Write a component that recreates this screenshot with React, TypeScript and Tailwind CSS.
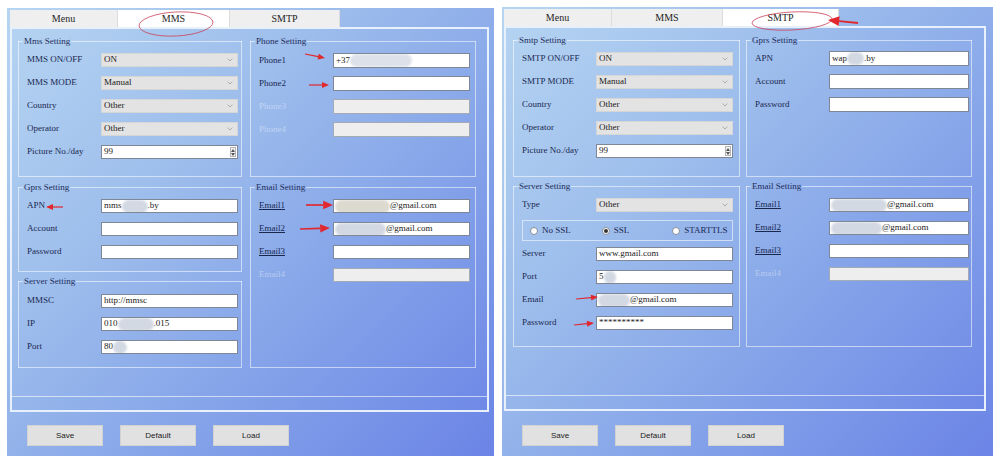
import type { ReactNode } from 'react'
import { clsx, type ClassValue } from 'clsx'
import { twMerge } from 'tailwind-merge'

const cn = (...inputs: ClassValue[]) => twMerge(clsx(inputs))

function Blob({ className }: { className?: string }) {
  return <span className={cn('inline-block h-[13px] shrink-0 rounded-full bg-[#d3d9e3] blur-[1px]', className)} />
}

function GroupBox({
  title,
  className,
  bodyClass,
  children,
}: {
  title: string
  className?: string
  bodyClass?: string
  children?: ReactNode
}) {
  return (
    <div className={cn('flex flex-col', className)}>
      <div className="flex h-[11px] items-center">
        <div className="h-px w-[5px] bg-white/55" />
        <span className="whitespace-nowrap px-[1px] text-[9px] leading-[11px] text-[#1f2e5c]">{title}</span>
        <div className="h-px flex-1 bg-white/55" />
      </div>
      <div className={cn('-mt-[6px] flex flex-1 flex-col gap-[9px] border border-t-0 border-white/55 pl-[8px] pt-[12px]', bodyClass)}>
        {children}
      </div>
    </div>
  )
}

function Row({
  label,
  disabled,
  underline,
  className,
  children,
}: {
  label: string
  disabled?: boolean
  underline?: boolean
  className?: string
  children: ReactNode
}) {
  return (
    <div className={cn('flex h-[14px] items-center', className)}>
      <span
        className={cn(
          'w-[74px] shrink-0 whitespace-nowrap text-[9px] text-[#1a2850]',
          disabled && 'text-white/40',
          underline && 'underline decoration-[0.5px] underline-offset-1',
        )}
      >
        {label}
      </span>
      {children}
    </div>
  )
}

function Select({ value }: { value: string }) {
  return (
    <div className="flex h-[14px] w-[137px] items-center justify-between border border-[#d6d6d6] bg-[#e3e3e3] pl-[2px] pr-[4px] text-[9px] text-[#1a1a1a]">
      <span>{value}</span>
      <svg width="6" height="4" viewBox="0 0 6 4">
        <path d="M0.6 0.6 L3 3 L5.4 0.6" fill="none" stroke="#a0a0a0" strokeWidth="0.8" />
      </svg>
    </div>
  )
}

function TextBox({
  children,
  disabled,
  className,
}: {
  children?: ReactNode
  disabled?: boolean
  className?: string
}) {
  return (
    <div
      className={cn(
        'flex h-[14px] w-[137px] items-center overflow-hidden whitespace-nowrap border border-[#7f8797] bg-white pl-[2px] text-[9px] text-[#1a1a1a]',
        disabled && 'border-[#a4abb7] bg-[#eeeeee]',
        className,
      )}
    >
      {children}
    </div>
  )
}

function NumberBox({ value }: { value: string }) {
  return (
    <TextBox>
      <span>{value}</span>
      <div className="ml-auto mr-[1px] flex h-[10px] w-[6px] flex-col items-center justify-center gap-[1px] border border-[#b4b4b4] bg-[#f2f2f2]">
        <svg width="4" height="3" viewBox="0 0 4 3">
          <path d="M0 3 L2 0 L4 3 Z" fill="#555" />
        </svg>
        <svg width="4" height="3" viewBox="0 0 4 3">
          <path d="M0 0 L2 3 L4 0 Z" fill="#555" />
        </svg>
      </div>
    </TextBox>
  )
}

function Radio({ label, checked, className }: { label: string; checked?: boolean; className?: string }) {
  return (
    <div className={cn('flex items-center gap-[4px] text-[9px] text-[#1a2850]', className)}>
      <span className="flex h-[8px] w-[8px] items-center justify-center rounded-full border border-[#8a8f99] bg-white">
        {checked && <span className="h-[4px] w-[4px] rounded-full bg-[#333]" />}
      </span>
      <span>{label}</span>
    </div>
  )
}

function Tabs({ active, widths }: { active: string; widths: string[] }) {
  const tabs = ['Menu', 'MMS', 'SMTP']
  return (
    <div className="flex h-[17px]">
      {tabs.map((t, i) => (
        <div
          key={t}
          className={cn(
            'flex items-center justify-center border-r border-[#dcdcdc] bg-[#efefef] text-[10px] text-[#1e1e1e]',
            t === active && 'bg-white',
            widths[i],
          )}
        >
          {t}
        </div>
      ))}
    </div>
  )
}

function Buttons({ className }: { className?: string }) {
  return (
    <div className={cn('mt-[13px] flex gap-[17px]', className)}>
      {['Save', 'Default', 'Load'].map((b) => (
        <div
          key={b}
          className="flex h-[21px] w-[76px] items-center justify-center border border-[#d2d2d2] bg-[#e1e1e1] font-['Liberation_Sans',Arial,sans-serif] text-[8px] text-[#222]"
        >
          {b}
        </div>
      ))}
    </div>
  )
}

function Frame({ className, children }: { className?: string; children: ReactNode }) {
  return (
    <div className={cn('flex h-[385px] flex-col border-2 border-[#e8f0fb]', className)}>
      <div className="flex flex-1">{children}</div>
      <div className="h-[14px] border-t border-white/60" />
    </div>
  )
}

const panelBg =
  'bg-[linear-gradient(135deg,#b6d5f2_0%,#9dbdec_35%,#84a3e9_65%,#6b84e6_100%)]'

function MmsPanel() {
  return (
    <div className={cn('h-[448px] w-[487px] pl-[3px] pt-[2px]', panelBg)}>
      <Tabs active="MMS" widths={['w-[108px]', 'w-[112px]', 'w-[110px]']} />
      <Frame className="w-[479px]">
        <div className="flex gap-[8px] pl-[6px] pt-[7px]">
          <div className="flex w-[224px] flex-col">
            <GroupBox title="Mms Setting" className="h-[141px]">
              <Row label="MMS ON/OFF"><Select value="ON" /></Row>
              <Row label="MMS MODE"><Select value="Manual" /></Row>
              <Row label="Country"><Select value="Other" /></Row>
              <Row label="Operator"><Select value="Other" /></Row>
              <Row label="Picture No./day"><NumberBox value="99" /></Row>
            </GroupBox>
            <GroupBox title="Gprs Setting" className="mt-[5px] h-[90px]">
              <Row label="APN">
                <TextBox>
                  <span>mms</span>
                  <Blob className="w-[26px]" />
                  <span>.by</span>
                </TextBox>
              </Row>
              <Row label="Account"><TextBox /></Row>
              <Row label="Password"><TextBox /></Row>
            </GroupBox>
            <GroupBox title="Server Setting" className="mt-[4px] h-[92px]" bodyClass="pt-[13px]">
              <Row label="MMSC"><TextBox>http://mmsc</TextBox></Row>
              <Row label="IP">
                <TextBox>
                  <span>010</span>
                  <Blob className="w-[36px]" />
                  <span>.015</span>
                </TextBox>
              </Row>
              <Row label="Port">
                <TextBox>
                  <span>80</span>
                  <Blob className="w-[14px]" />
                </TextBox>
              </Row>
            </GroupBox>
          </div>
          <div className="flex w-[226px] flex-col">
            <GroupBox title="Phone Setting" className="h-[141px]" bodyClass="gap-[8px] pt-[12px]">
              <Row label="Phone1" className="h-[15px]">
                <TextBox className="h-[15px]">
                  <span>+37</span>
                  <Blob className="w-[62px] bg-[#dde2ea]" />
                </TextBox>
              </Row>
              <Row label="Phone2" className="h-[15px]"><TextBox className="h-[15px]" /></Row>
              <Row label="Phone3" disabled className="h-[15px]"><TextBox disabled className="h-[15px]" /></Row>
              <Row label="Phone4" disabled className="h-[15px]"><TextBox disabled className="h-[15px]" /></Row>
            </GroupBox>
            <GroupBox title="Email Setting" className="mt-[5px] h-[186px]">
              <Row label="Email1" underline>
                <TextBox>
                  <Blob className="-ml-[1px] w-[55px] bg-[#dcd9cf]" />
                  <span>@gmail.com</span>
                </TextBox>
              </Row>
              <Row label="Email2" underline>
                <TextBox>
                  <Blob className="-ml-[1px] w-[51px]" />
                  <span>@gmail.com</span>
                </TextBox>
              </Row>
              <Row label="Email3" underline><TextBox /></Row>
              <Row label="Email4" disabled><TextBox disabled /></Row>
            </GroupBox>
          </div>
        </div>
      </Frame>
      <Buttons className="ml-[17px]" />
    </div>
  )
}

function SmtpPanel() {
  return (
    <div className={cn('-mt-[1px] h-[449px] w-[491px] pl-[2px] pt-[2px]', panelBg)}>
      <Tabs active="SMTP" widths={['w-[108px]', 'w-[111px]', 'w-[116px]']} />
      <Frame className="w-[482px]">
        <div className="flex gap-[6px] pl-[7px] pt-[7px]">
          <div className="flex w-[227px] flex-col">
            <GroupBox title="Smtp Setting" className="h-[142px]">
              <Row label="SMTP ON/OFF"><Select value="ON" /></Row>
              <Row label="SMTP MODE"><Select value="Manual" /></Row>
              <Row label="Country"><Select value="Other" /></Row>
              <Row label="Operator"><Select value="Other" /></Row>
              <Row label="Picture No./day"><NumberBox value="99" /></Row>
            </GroupBox>
            <GroupBox title="Server Setting" className="mt-[4px] h-[166px]" bodyClass="gap-0">
              <Row label="Type"><Select value="Other" /></Row>
              <div className="mb-[6px] mt-[8px] flex h-[21px] w-[211px] items-center border border-white/55 pl-[7px]">
                <Radio label="No SSL" />
                <Radio label="SSL" checked className="ml-[31px]" />
                <Radio label="STARTTLS" className="ml-[43px]" />
              </div>
              <div className="flex flex-col gap-[9px]">
                <Row label="Server"><TextBox>www.gmail.com</TextBox></Row>
                <Row label="Port">
                  <TextBox>
                    <span>5</span>
                    <Blob className="w-[12px]" />
                  </TextBox>
                </Row>
                <Row label="Email">
                  <TextBox>
                    <Blob className="-ml-[1px] w-[32px]" />
                    <span>@gmail.com</span>
                  </TextBox>
                </Row>
                <Row label="Password"><TextBox>**********</TextBox></Row>
              </div>
            </GroupBox>
          </div>
          <div className="flex w-[226px] flex-col">
            <GroupBox title="Gprs Setting" className="h-[142px]" bodyClass="gap-[8px] pt-[11px]">
              <Row label="APN" className="h-[15px]">
                <TextBox className="h-[15px] w-[140px]">
                  <span>wap</span>
                  <Blob className="w-[17px]" />
                  <span>.by</span>
                </TextBox>
              </Row>
              <Row label="Account" className="h-[15px]"><TextBox className="h-[15px] w-[140px]" /></Row>
              <Row label="Password" className="h-[15px]"><TextBox className="h-[15px] w-[140px]" /></Row>
            </GroupBox>
            <GroupBox title="Email Setting" className="mt-[4px] h-[166px]">
              <Row label="Email1" underline>
                <TextBox className="w-[140px]">
                  <Blob className="-ml-[1px] w-[56px]" />
                  <span>@gmail.com</span>
                </TextBox>
              </Row>
              <Row label="Email2" underline>
                <TextBox className="w-[140px]">
                  <Blob className="-ml-[1px] w-[51px]" />
                  <span>@gmail.com</span>
                </TextBox>
              </Row>
              <Row label="Email3" underline><TextBox className="w-[140px]" /></Row>
              <Row label="Email4" disabled><TextBox disabled className="w-[140px]" /></Row>
            </GroupBox>
          </div>
        </div>
      </Frame>
      <Buttons className="ml-[18px] mt-[14px]" />
    </div>
  )
}

type Arrow = [number, number, number, number, number?]

const arrows: Arrow[] = [
  [305, 54, 325, 58],
  [309, 85, 329, 85],
  [63, 207, 46, 207],
  [306, 205, 333, 205, 1.4],
  [300, 229, 330, 228, 1.4],
  [858, 23, 828, 20, 1.6],
  [576, 299, 598, 297],
  [574, 325, 594, 323],
]

function ArrowShape({ a }: { a: Arrow }) {
  const [x1, y1, x2, y2, s = 1] = a
  const len = Math.hypot(x2 - x1, y2 - y1)
  const dx = (x2 - x1) / len
  const dy = (y2 - y1) / len
  const hl = 7 * s
  const hw = 3 * s
  const bx = x2 - dx * hl
  const by = y2 - dy * hl
  const head = `${x2},${y2} ${bx - dy * hw},${by + dx * hw} ${bx + dy * hw},${by - dx * hw}`
  return (
    <g>
      <line x1={x1} y1={y1} x2={bx} y2={by} stroke="#e0282e" strokeWidth={1.2 * s} />
      <polygon points={head} fill="#e0282e" />
    </g>
  )
}

export default function App() {
  return (
    <div className="relative h-[463px] w-[1000px] overflow-hidden bg-white font-['Liberation_Serif','Times_New_Roman',serif]">
      <div className="flex gap-[8px] pl-[7px] pt-[8px]">
        <MmsPanel />
        <SmtpPanel />
      </div>
      <svg className="pointer-events-none absolute inset-0" width="1000" height="463" viewBox="0 0 1000 463">
        <ellipse cx="176" cy="24" rx="37" ry="12" fill="none" stroke="#c9455c" strokeWidth="0.8" transform="rotate(-3 176 24)" />
        <ellipse cx="792" cy="21" rx="40" ry="9" fill="none" stroke="#c9455c" strokeWidth="0.8" transform="rotate(-3 792 21)" />
        {arrows.map((a, i) => (
          <ArrowShape key={i} a={a} />
        ))}
      </svg>
    </div>
  )
}
